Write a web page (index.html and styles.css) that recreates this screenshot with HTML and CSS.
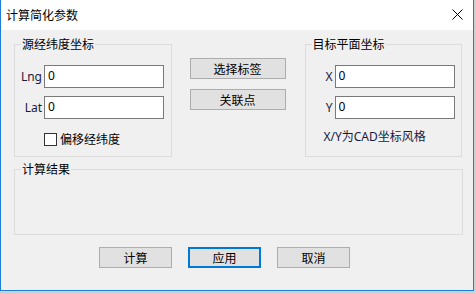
FILE: index.html
```html
<!DOCTYPE html>
<html lang="zh-CN">
<head>
  <meta charset="UTF-8">
  <title>计算简化参数</title>
  <link rel="stylesheet" href="styles.css">
</head>
<body>
  <div class="window">
    <div class="titlebar">
      <span class="title">计算简化参数</span>
      <svg class="close-icon" width="11" height="11" viewBox="0 0 11 11">
        <path d="M0.5 0.5 L10.5 10.5 M10.5 0.5 L0.5 10.5" stroke="#000" stroke-width="1" fill="none"/>
      </svg>
    </div>
    <div class="content">
      <div class="top-row">
        <fieldset class="group group-side">
          <legend>源经纬度坐标</legend>
          <div class="field-row first-row">
            <label class="field-label">Lng</label>
            <input class="field-input" type="text" value="0">
          </div>
          <div class="field-row">
            <label class="field-label">Lat</label>
            <input class="field-input" type="text" value="0">
          </div>
          <label class="check-row">
            <input class="check-box" type="checkbox">
            <span>偏移经纬度</span>
          </label>
        </fieldset>

        <div class="middle-col">
          <button class="btn btn-wide">选择标签</button>
          <button class="btn btn-wide">关联点</button>
        </div>

        <fieldset class="group group-side group-target">
          <legend>目标平面坐标</legend>
          <div class="field-row first-row">
            <label class="field-label">X</label>
            <input class="field-input" type="text" value="0">
          </div>
          <div class="field-row">
            <label class="field-label">Y</label>
            <input class="field-input" type="text" value="0">
          </div>
          <p class="hint">X/Y为CAD坐标风格</p>
        </fieldset>
      </div>

      <fieldset class="group group-result">
        <legend>计算结果</legend>
      </fieldset>

      <div class="button-row">
        <button class="btn">计算</button>
        <button class="btn btn-default">应用</button>
        <button class="btn">取消</button>
      </div>
    </div>
  </div>
</body>
</html>
```

FILE: styles.css
```css
* {
  --window-border: #1c7ed6;
  --dialog-bg: #f0f0f0;
  --group-line: #dcdcdc;
  --input-border: #7a7a7a;
  --btn-bg: #e1e1e1;
  --btn-border: #adadad;
  --accent: #0078d7;
}
body {
  margin: 0;
  background-color: #cfcfcf;
  font-family: "Noto Sans", "Noto Sans CJK SC", sans-serif;
  font-size: 12px;
  color: #000;
}

.window {
  width: 472px;
  height: 290px;
  border: 1px solid var(--window-border);
  border-top: none;
  background-color: var(--dialog-bg);
}

.titlebar {
  height: 30px;
  display: flex;
  align-items: center;
  justify-content: space-between;
  padding: 0 10px 0 5px;
  background-color: #fff;
}
.title {
  line-height: 15px;
}
.close-icon {
  display: block;
  margin-bottom: 1px;
}

.content {
  padding: 7px 11px 0 13px;
}

.top-row {
  display: flex;
}

.group {
  box-sizing: border-box;
  margin: 0;
  padding: 0;
  min-width: 0;
  border: 1px solid var(--group-line);
}
.group legend {
  margin-left: 6px;
  padding: 0 1px;
  line-height: 15px;
}
.group-side {
  width: 158px;
  height: 120px;
}
.group-target {
  margin-left: 19px;
}
.group-result {
  width: 449px;
  height: 73px;
  margin-top: 5px;
}

.field-row {
  display: flex;
  align-items: center;
  margin-top: 8px;
}
.first-row {
  margin-top: 13px;
}
.field-label {
  width: 27px;
  margin-right: 2px;
  text-align: right;
  color: #1a1a40;
}
.field-input {
  box-sizing: border-box;
  width: 120px;
  height: 23px;
  margin: 0;
  padding: 0 0 3px 3px;
  border: 1px solid var(--input-border);
  background: #fff;
  font: inherit;
  color: #000;
  outline: none;
}

.check-row {
  display: flex;
  align-items: center;
  gap: 3px;
  margin: 11px 0 0 29px;
}
.check-box {
  appearance: none;
  box-sizing: border-box;
  width: 13px;
  height: 13px;
  margin: 0;
  border: 1px solid #333;
  background: #fff;
}

.hint {
  margin: 10px 0 0 18px;
  line-height: 15px;
  color: #1a1a40;
}

.middle-col {
  display: flex;
  flex-direction: column;
  gap: 10px;
  margin: 21px 0 0 18px;
}

.btn {
  box-sizing: border-box;
  width: 73px;
  height: 21px;
  margin: 0;
  padding: 0;
  border: 1px solid var(--btn-border);
  background-color: var(--btn-bg);
  font: inherit;
  color: #000;
}
.btn-wide {
  width: 96px;
}
.btn-default {
  border: 2px solid var(--accent);
}

.button-row {
  display: flex;
  gap: 16px;
  margin: 12px 0 0 85px;
}
```
